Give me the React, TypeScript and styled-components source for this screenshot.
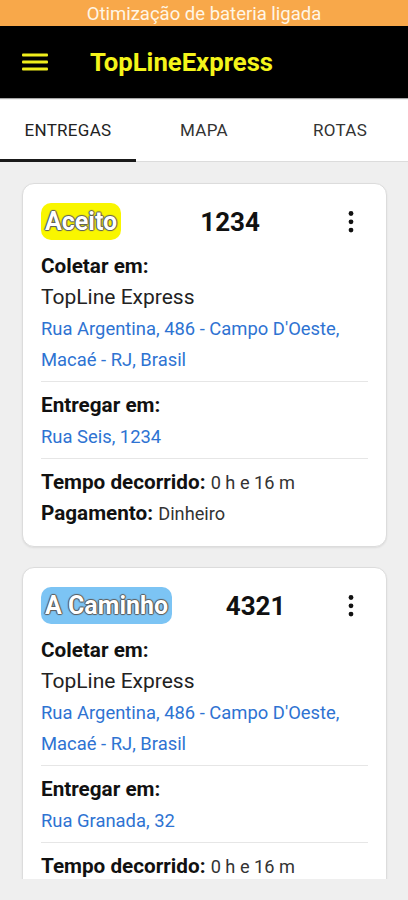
import { useState } from 'react'

import styled, { createGlobalStyle } from 'styled-components'

const GlobalStyle = createGlobalStyle`
  html, body {
    margin: 0;
    padding: 0;
    background: #efefef;
    font-family: Roboto, "Noto Sans", "Liberation Sans", sans-serif;
  }
  * {
    box-sizing: border-box;
  }
`

const StyledPage = styled.div`
  width: 408px;
  height: 900px;
  display: flex;
  flex-direction: column;
  background: #efefef;
  overflow: hidden;
`
const StyledStatusBar = styled.div`
  height: 26px;
  background: #f8a84a;
  color: #fff6e6;
  font-size: 18.5px;
  line-height: 28px;
  text-align: center;
`
const StyledAppBar = styled.header`
  height: 72px;
  background: #000;
  display: flex;
  align-items: center;
  padding: 0 0 0 22px;
  gap: 42px;
  box-shadow: 0 1px 1px rgba(0, 0, 0, 0.35);
  position: relative;
  z-index: 1;
`
const StyledMenuButton = styled.button`
  width: 26px;
  height: 24px;
  padding: 0;
  border: none;
  background: transparent;
  display: flex;
  align-items: center;
  justify-content: center;
`
const StyledTitle = styled.h1`
  margin: 0;
  font-size: 25.7px;
  font-weight: 700;
  color: #f4f41a;
`
const StyledTabs = styled.nav`
  height: 64px;
  background: #fff;
  display: grid;
  grid-template-columns: repeat(3, 1fr);
  border-bottom: 1px solid #dcdcdc;
`
const StyledTab = styled.button<{ $active?: boolean }>`
  border: none;
  background: transparent;
  font-family: inherit;
  font-size: 17px;
  letter-spacing: 0.3px;
  color: ${({ $active }) => ($active ? '#222' : '#333')};
  text-transform: uppercase;
  padding: 2px 0 0;
  border-bottom: 3px solid ${({ $active }) => ($active ? '#1a1a1a' : 'transparent')};
  margin-bottom: -1px;
`
const StyledList = styled.main`
  height: 717px;
  overflow: hidden;
  padding: 21px 21px 0 22px;
  display: flex;
  flex-direction: column;
  gap: 20px;
`
const StyledCard = styled.article`
  flex-shrink: 0;
  background: #fff;
  border: 1px solid #dcdcdc;
  border-radius: 12px;
  box-shadow: 0 1px 2px rgba(0, 0, 0, 0.08);
  padding: 19px 18px 17px;
`
const StyledHeader = styled.div`
  height: 37px;
  display: flex;
  align-items: center;
  margin-bottom: 11px;
`
const StyledBadge = styled.span<{ $color: string }>`
  height: 37px;
  display: inline-flex;
  align-items: center;
  padding: 0 4px;
  border-radius: 10px;
  background: ${({ $color }) => $color};
  color: #fff;
  font-size: 25px;
  font-weight: 700;
  text-shadow:
    0 0 1px #444,
    0 0 1px #444,
    1px 0 1px #666,
    -1px 0 1px #666,
    0 1px 1px #666,
    0 -1px 1px #666;
`
const StyledNumber = styled.span`
  flex: 1;
  text-align: center;
  font-size: 26px;
  font-weight: 700;
  color: #111;
`
const StyledKebab = styled.button`
  width: 24px;
  height: 30px;
  margin-right: 5px;
  padding: 0;
  border: none;
  background: transparent;
  display: flex;
  align-items: center;
  justify-content: center;
`
const StyledLabel = styled.div`
  font-size: 20.7px;
  font-weight: 700;
  line-height: 31px;
  color: #111;
`
const StyledText = styled.div`
  font-size: 21px;
  line-height: 31px;
  color: #222;
`
const StyledAddress = styled.div`
  font-size: 18.4px;
  line-height: 31px;
  color: #2e73d2;
`
const StyledDivider = styled.hr`
  border: none;
  border-top: 1px solid #e6e6e6;
  margin: 6px 0 8px;
`
const StyledValue = styled.span`
  font-size: 18.2px;
  font-weight: 400;
  color: #333;
`

type Delivery = {
  id: number
  status: string
  statusColor: string
  pickupName: string
  pickupAddress: string[]
  dropAddress: string
  elapsed: string
  payment: string
}

const deliveries: Delivery[] = [
  {
    id: 1234,
    status: 'Aceito',
    statusColor: '#f9f600',
    pickupName: 'TopLine Express',
    pickupAddress: ["Rua Argentina, 486 - Campo D'Oeste,", 'Macaé - RJ, Brasil'],
    dropAddress: 'Rua Seis, 1234',
    elapsed: '0 h e 16 m',
    payment: 'Dinheiro',
  },
  {
    id: 4321,
    status: 'A Caminho',
    statusColor: '#7cc4f4',
    pickupName: 'TopLine Express',
    pickupAddress: ["Rua Argentina, 486 - Campo D'Oeste,", 'Macaé - RJ, Brasil'],
    dropAddress: 'Rua Granada, 32',
    elapsed: '0 h e 16 m',
    payment: 'Dinheiro',
  },
]

const MenuIcon = () => (
  <svg width="26" height="20" viewBox="0 0 26 20">
    <rect x="0" y="1.5" width="26" height="3" rx="1" fill="#f0ee1c" />
    <rect x="0" y="8.5" width="26" height="3" rx="1" fill="#f0ee1c" />
    <rect x="0" y="15.5" width="26" height="3" rx="1" fill="#f0ee1c" />
  </svg>
)

const MoreIcon = () => (
  <svg width="8" height="24" viewBox="0 0 8 24">
    <circle cx="4" cy="3.5" r="2.4" fill="#111" />
    <circle cx="4" cy="11.8" r="2.4" fill="#111" />
    <circle cx="4" cy="20.1" r="2.4" fill="#111" />
  </svg>
)

const DeliveryCard = ({ delivery }: { delivery: Delivery }) => (
  <StyledCard>
    <StyledHeader>
      <StyledBadge $color={delivery.statusColor}>{delivery.status}</StyledBadge>
      <StyledNumber>{delivery.id}</StyledNumber>
      <StyledKebab aria-label="Mais opções">
        <MoreIcon />
      </StyledKebab>
    </StyledHeader>
    <StyledLabel>Coletar em:</StyledLabel>
    <StyledText>{delivery.pickupName}</StyledText>
    {delivery.pickupAddress.map((line) => (
      <StyledAddress key={line}>{line}</StyledAddress>
    ))}
    <StyledDivider />
    <StyledLabel>Entregar em:</StyledLabel>
    <StyledAddress>{delivery.dropAddress}</StyledAddress>
    <StyledDivider />
    <StyledLabel>
      Tempo decorrido: <StyledValue>{delivery.elapsed}</StyledValue>
    </StyledLabel>
    <StyledLabel>
      Pagamento: <StyledValue>{delivery.payment}</StyledValue>
    </StyledLabel>
  </StyledCard>
)

const tabs = ['Entregas', 'Mapa', 'Rotas']

export default function App() {
  const [activeTab, setActiveTab] = useState(0)

  return (
    <StyledPage>
      <GlobalStyle />
      <StyledStatusBar>Otimização de bateria ligada</StyledStatusBar>
      <StyledAppBar>
        <StyledMenuButton aria-label="Menu">
          <MenuIcon />
        </StyledMenuButton>
        <StyledTitle>TopLineExpress</StyledTitle>
      </StyledAppBar>
      <StyledTabs>
        {tabs.map((tab, idx) => (
          <StyledTab
            key={tab}
            $active={idx === activeTab}
            onClick={() => setActiveTab(idx)}
          >
            {tab}
          </StyledTab>
        ))}
      </StyledTabs>
      <StyledList>
        {deliveries.map((delivery) => (
          <DeliveryCard key={delivery.id} delivery={delivery} />
        ))}
      </StyledList>
    </StyledPage>
  )
}
